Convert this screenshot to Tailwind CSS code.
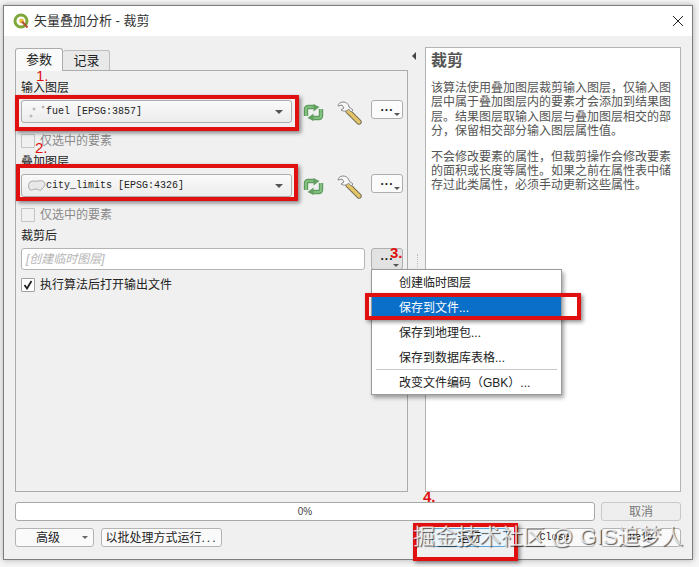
<!DOCTYPE html>
<html lang="zh">
<head>
    <meta charset="UTF-8">
    <meta name="viewport" content="width=device-width, initial-scale=1.0">
    <title>矢量叠加分析 - 裁剪</title>
    <script src="https://cdn.jsdelivr.net/npm/@tailwindcss/browser@4"></script>
</head>
<body class="bg-[#f5f5f5] overflow-hidden">
    <div class="relative w-[699px] h-[567px] pt-[5px] pl-[3px] text-[12px] leading-[14px] text-[#222] font-['Liberation_Sans','Noto_Sans_CJK_SC',sans-serif] overflow-hidden">

        <!-- dialog -->
        <div class="w-[690px] h-[555px] bg-[#f0f0f0] border border-[#7d7d7d] shadow-[0_0_6px_rgba(0,0,0,0.3)]">
            <!-- title bar -->
            <div class="h-[30px] bg-white flex items-center pl-[9px] pr-[8px]">
                <svg class="w-[16px] h-[16px]" viewBox="0 0 16 16">
                    <circle cx="8" cy="8" r="6" fill="none" stroke="#7fa83a" stroke-width="3"/>
                    <circle cx="8.5" cy="8" r="2.4" fill="#f0c040"/>
                    <path d="M9 8.5 L14.5 14.5" stroke="#b5503a" stroke-width="2"/>
                </svg>
                <span class="ml-[5px] text-[13px] text-[#333]">矢量叠加分析 - 裁剪</span>
                <svg class="ml-auto w-[12px] h-[12px]" viewBox="0 0 12 12">
                    <path d="M1 1 L11 11 M11 1 L1 11" stroke="#222" stroke-width="1"/>
                </svg>
            </div>

            <div class="px-[11px] pt-[11px]">
                <div class="flex h-[445px]">
                    <!-- left column -->
                    <div class="w-[393px] flex flex-col">
                        <div class="flex items-end h-[23px] text-[13px]">
                            <div class="w-[48px] h-[23px] bg-[#fafafa] border border-b-0 border-[#acacac] rounded-t-[3px] flex items-center justify-center -mb-px z-10">参数</div>
                            <div class="w-[47px] h-[20px] bg-[#e9e9e9] border border-l-0 border-b-0 border-[#bdbdbd] rounded-t-[3px] flex items-center justify-center pl-[1px]">记录</div>
                        </div>
                        <div class="flex-1 border border-[#acacac] bg-[#f0f0f0] pl-[5px] pt-[10px] flex flex-col">
                            <div class="h-[14px]">输入图层</div>
                            <div class="mt-[5px] flex h-[23px]">
                                <div class="w-[271px] h-[23px] border border-[#adadad] rounded-[3px] bg-gradient-to-b from-[#fafafa] to-[#ececec] flex items-center pl-[6px] pr-[8px]">
                                    <svg class="w-[18px] h-[14px]" viewBox="0 0 18 14"><g fill="none" stroke="#aaa" stroke-width="1"><circle cx="3" cy="11" r="1"/><circle cx="6" cy="4" r="1"/><circle cx="15" cy="2" r="1"/></g></svg>
                                    <span class="font-['Liberation_Mono',monospace] text-[10px] text-[#222]">fuel [EPSG:3857]</span>
                                    <span class="ml-auto w-0 h-0 border-x-[4px] border-x-transparent border-t-[4px] border-t-[#555]"></span>
                                </div>
                                <svg class="ml-[10px] mt-[4px] w-[23px] h-[17px]" viewBox="0 0 23 17">
                                    <g fill="none" stroke-linejoin="round">
                                        <path d="M4 12 V5 a2 2 0 0 1 2 -2 H13 M19 5 V12 a2 2 0 0 1 -2 2 H10" stroke="#5f9d5f" stroke-width="4.4"/>
                                        <path d="M4 12 V5 a2 2 0 0 1 2 -2 H13 M19 5 V12 a2 2 0 0 1 -2 2 H10" stroke="#8cc888" stroke-width="1.6"/>
                                    </g>
                                    <path d="M11.5 0 L17.5 3 L11.5 7.5 Z M11.5 9.5 L5.5 14 L11.5 17 Z" fill="#639f62"/>
                                </svg>
                                <svg class="ml-[12px] mt-[1px] w-[25px] h-[24px]" viewBox="0 0 25 24">
                                    <path d="M11 10 L22 21" stroke="#77705a" stroke-width="5.4" stroke-linecap="round"/>
                                    <path d="M11 10 L22 21" stroke="#e4c566" stroke-width="3.4" stroke-linecap="round"/>
                                    <path d="M6 1 C3 1 1 3 1 5 L5 4 L7 7 L4 9 C7 11 11 10 11.5 8 L14 11 L16 9 L12 6 C12 3 9 1 6 1 Z" fill="#f7f7f7" stroke="#8a8a8a" stroke-width="1"/>
                                </svg>
                                <div class="ml-[9px] relative w-[32px] h-[19px] bg-[#fbfbfb] border border-[#adadad] rounded-[3px] text-center font-bold leading-[12px] tracking-[1px]">...<span class="absolute right-[2px] bottom-[2px] w-0 h-0 border-x-[3px] border-x-transparent border-t-[3px] border-t-[#555]"></span></div>
                            </div>
                            <div class="mt-[11px] flex items-center h-[14px] text-[#8a8a8a]">
                                <span class="w-[14px] h-[14px] border border-[#c4c4c4] bg-[#f0f0f0] rounded-[1px]"></span>
                                <span class="ml-[5px]">仅选中的要素</span>
                            </div>
                            <div class="mt-[7px] h-[14px]">叠加图层</div>
                            <div class="mt-[5px] flex h-[23px]">
                                <div class="w-[271px] h-[23px] border border-[#adadad] rounded-[3px] bg-gradient-to-b from-[#fafafa] to-[#ececec] flex items-center pl-[6px] pr-[8px]">
                                    <svg class="w-[18px] h-[14px]" viewBox="0 0 18 14"><path d="M2 3 C5 1 8 3 10 2 C13 1 17 2 17 5 C17 8 15 8 14 10 C12 13 11 10 8 10 C5 10 2 13 1 9 C0 7 1 4 2 3 Z" fill="#e8e8e8" stroke="#a8a8a8"/></svg>
                                    <span class="font-['Liberation_Mono',monospace] text-[10px] text-[#222]">city_limits [EPSG:4326]</span>
                                    <span class="ml-auto w-0 h-0 border-x-[4px] border-x-transparent border-t-[4px] border-t-[#555]"></span>
                                </div>
                                <svg class="ml-[10px] mt-[4px] w-[23px] h-[17px]" viewBox="0 0 23 17">
                                    <g fill="none" stroke-linejoin="round">
                                        <path d="M4 12 V5 a2 2 0 0 1 2 -2 H13 M19 5 V12 a2 2 0 0 1 -2 2 H10" stroke="#5f9d5f" stroke-width="4.4"/>
                                        <path d="M4 12 V5 a2 2 0 0 1 2 -2 H13 M19 5 V12 a2 2 0 0 1 -2 2 H10" stroke="#8cc888" stroke-width="1.6"/>
                                    </g>
                                    <path d="M11.5 0 L17.5 3 L11.5 7.5 Z M11.5 9.5 L5.5 14 L11.5 17 Z" fill="#639f62"/>
                                </svg>
                                <svg class="ml-[12px] mt-[1px] w-[25px] h-[24px]" viewBox="0 0 25 24">
                                    <path d="M11 10 L22 21" stroke="#77705a" stroke-width="5.4" stroke-linecap="round"/>
                                    <path d="M11 10 L22 21" stroke="#e4c566" stroke-width="3.4" stroke-linecap="round"/>
                                    <path d="M6 1 C3 1 1 3 1 5 L5 4 L7 7 L4 9 C7 11 11 10 11.5 8 L14 11 L16 9 L12 6 C12 3 9 1 6 1 Z" fill="#f7f7f7" stroke="#8a8a8a" stroke-width="1"/>
                                </svg>
                                <div class="ml-[9px] relative w-[32px] h-[19px] bg-[#fbfbfb] border border-[#adadad] rounded-[3px] text-center font-bold leading-[12px] tracking-[1px]">...<span class="absolute right-[2px] bottom-[2px] w-0 h-0 border-x-[3px] border-x-transparent border-t-[3px] border-t-[#555]"></span></div>
                            </div>
                            <div class="mt-[11px] flex items-center h-[14px] text-[#8a8a8a]">
                                <span class="w-[14px] h-[14px] border border-[#c4c4c4] bg-[#f0f0f0] rounded-[1px]"></span>
                                <span class="ml-[5px]">仅选中的要素</span>
                            </div>
                            <div class="mt-[7px] h-[14px]">裁剪后</div>
                            <div class="mt-[5px] flex h-[22px]">
                                <div class="w-[344px] h-[22px] bg-white border border-[#b4b4b4] rounded-[3px] flex items-center pl-[4px] italic text-[#b5b5b5]">[创建临时图层]</div>
                                <div class="ml-[6px] relative w-[32px] h-[22px] bg-[#e2e2e2] border border-[#b0b0b0] rounded-[3px] text-center font-bold leading-[14px] tracking-[1px]">...<span class="absolute right-[3px] bottom-[2px] w-0 h-0 border-x-[3px] border-x-transparent border-t-[3px] border-t-[#555]"></span></div>
                            </div>
                            <div class="mt-[8px] flex items-center h-[14px] text-[#222]">
                                <span class="w-[14px] h-[14px] border border-[#a0a0a0] bg-white rounded-[1px] flex items-center justify-center">
                                    <svg class="w-[10px] h-[10px]" viewBox="0 0 10 10"><path d="M1.5 5 L4 8.5 L8.5 1" fill="none" stroke="#222" stroke-width="1.8"/></svg>
                                </span>
                                <span class="ml-[5px]">执行算法后打开输出文件</span>
                            </div>
                        </div>
                    </div>

                    <!-- splitter -->
                    <div class="w-[17px] flex flex-col items-center pt-[5px]">
                        <span class="w-0 h-0 border-y-[4px] border-y-transparent border-r-[4px] border-r-[#444] -ml-[6px]"></span>
                        <span class="mt-[194px] ml-[1px] w-px h-[20px] border-l border-dotted border-[#bbb]"></span>
                    </div>

                    <!-- help panel -->
                    <div class="w-[256px] bg-white border border-[#b4b4b4] pl-[5px] pr-[4px] pt-[3px] text-[#555]">
                        <h1 class="text-[16px] leading-[20px] font-bold text-[#555]">裁剪</h1>
                        <p class="mt-[10px] leading-[14.4px]">该算法使用叠加图层裁剪输入图层&#65292;仅输入图层中属于叠加图层内的要素才会添加到结果图层。结果图层取输入图层与叠加图层相交的部分&#65292;保留相交部分输入图层属性值。</p>
                        <p class="mt-[11px] leading-[14.4px]">不会修改要素的属性&#65292;但裁剪操作会修改要素的面积或长度等属性。如果之前在属性表中储存过此类属性&#65292;必须手动更新这些属性。</p>
                    </div>
                </div>

                <!-- progress -->
                <div class="mt-[10px] flex h-[19px] gap-[6px]">
                    <div class="w-[580px] bg-white border border-[#a8a8a8] rounded-[3px] flex items-center justify-center text-[10px] text-[#444]">0%</div>
                    <div class="w-[80px] bg-[#eeeeee] border border-[#c8c8c8] rounded-[3px] flex items-center justify-center text-[#777]">取消</div>
                </div>

                <!-- bottom buttons -->
                <div class="mt-[7px] flex h-[19px]">
                    <div class="w-[79px] bg-[#fafafa] border border-[#b4b4b4] rounded-[3px] flex items-center pl-[20px] relative">高级<span class="absolute right-[5px] top-[7px] w-0 h-0 border-x-[3px] border-x-transparent border-t-[3px] border-t-[#666]"></span></div>
                    <div class="ml-[7px] w-[121px] bg-[#fafafa] border border-[#b4b4b4] rounded-[3px] flex items-center justify-center">以批处理方式运行<span class="tracking-[2px]">...</span></div>
                    <div class="ml-[210px] w-[75px] bg-[#eaf4fb] border border-[#5ba4d6] rounded-[3px] flex items-center justify-center">运行</div>
                    <div class="ml-[7px] w-[81px] bg-[#fafafa] border border-[#b4b4b4] rounded-[3px] flex items-center justify-center font-['Liberation_Mono',monospace] text-[10px]">Close</div>
                    <div class="ml-[6px] w-[80px] bg-[#fafafa] border border-[#b4b4b4] rounded-[3px] flex items-center justify-center font-['Liberation_Mono',monospace] text-[10px]">Help</div>
                </div>
            </div>
        </div>

        <!-- dropdown menu -->
        <div class="absolute left-[371px] top-[269px] w-[191px] h-[126px] bg-white border border-[#9a9a9a] shadow-[2px_3px_4px_rgba(0,0,0,0.35)]">
            <div class="h-[25px] pl-[27px] flex items-center">创建临时图层</div>
            <div class="h-[25px] pl-[27px] flex items-center bg-[#0a6fc9] text-white">保存到文件...</div>
            <div class="h-[25px] pl-[27px] flex items-center">保存到地理包...</div>
            <div class="h-[25px] pl-[27px] flex items-center">保存到数据库表格...</div>
            <div class="mx-[4px] -mt-px mb-[2px] border-t border-[#c8c8c8]"></div>
            <div class="h-[22px] pl-[27px] flex items-center">改变文件编码&#65288;GBK&#65289;...</div>
        </div>

        <!-- red annotations -->
        <div class="absolute left-[15px] top-[95px] w-[284px] h-[36px] border-[4px] border-[#e01010] shadow-[2px_2px_4px_rgba(0,0,0,0.45)]"></div>
        <div class="absolute left-[16px] top-[164px] w-[282px] h-[37px] border-[4px] border-[#e01010] shadow-[2px_2px_4px_rgba(0,0,0,0.45)]"></div>
        <div class="absolute left-[365px] top-[293px] w-[216px] h-[27px] border-[4px] border-[#e01010] shadow-[2px_2px_4px_rgba(0,0,0,0.45)]"></div>
        <div class="absolute left-[413px] top-[523px] w-[105px] h-[38px] border-[4px] border-[#e01010] shadow-[2px_2px_4px_rgba(0,0,0,0.45)]"></div>
        <span class="absolute left-[36px] top-[68px] text-[15px] leading-[16px] text-[#e01010]">1.</span>
        <span class="absolute left-[35px] top-[140px] text-[15px] leading-[16px] text-[#e01010]">2.</span>
        <span class="absolute left-[390px] top-[245px] text-[15px] leading-[16px] font-bold text-[#e01010]">3.</span>
        <span class="absolute left-[423px] top-[489px] text-[15px] leading-[16px] font-bold text-[#e01010]">4.</span>

        <!-- watermark -->
        <span class="absolute left-[413px] top-[524px] whitespace-nowrap text-[22px] leading-[26px] text-white/75 [text-shadow:1px_1px_1px_rgba(0,0,0,0.65)]">掘金技术社区 @ GIS追梦人</span>
    </div>
</body>
</html>
